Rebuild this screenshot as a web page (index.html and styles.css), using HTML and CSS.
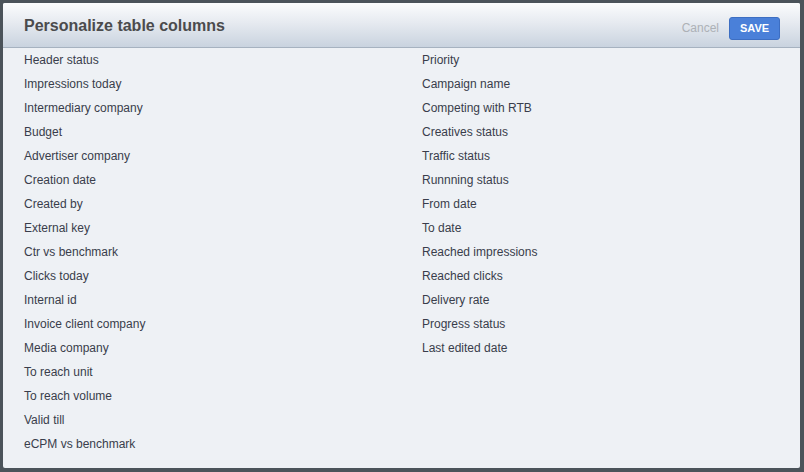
FILE: index.html
```html
<!DOCTYPE html>
<html>
<head>
<meta charset="utf-8">
<link rel="stylesheet" href="styles.css">
</head>
<body>
<div class="dialog">
  <div class="header">
    <h1 class="title">Personalize table columns</h1>
    <div class="actions">
      <span class="cancel">Cancel</span>
      <button class="save">SAVE</button>
    </div>
  </div>
  <div class="columns">
    <ul class="col">
      <li>Header status</li>
      <li>Impressions today</li>
      <li>Intermediary company</li>
      <li>Budget</li>
      <li>Advertiser company</li>
      <li>Creation date</li>
      <li>Created by</li>
      <li>External key</li>
      <li>Ctr vs benchmark</li>
      <li>Clicks today</li>
      <li>Internal id</li>
      <li>Invoice client company</li>
      <li>Media company</li>
      <li>To reach unit</li>
      <li>To reach volume</li>
      <li>Valid till</li>
      <li>eCPM vs benchmark</li>
    </ul>
    <ul class="col">
      <li>Priority</li>
      <li>Campaign name</li>
      <li>Competing with RTB</li>
      <li>Creatives status</li>
      <li>Traffic status</li>
      <li>Runnning status</li>
      <li>From date</li>
      <li>To date</li>
      <li>Reached impressions</li>
      <li>Reached clicks</li>
      <li>Delivery rate</li>
      <li>Progress status</li>
      <li>Last edited date</li>
    </ul>
  </div>
</div>
</body>
</html>
```
FILE: styles.css
```css
html, body {
  margin: 0;
  height: 100%;
}
body {
  background: #4b535a;
  padding: 3px 4px 4px 3px;
  box-sizing: border-box;
  font-family: "Liberation Sans", Arial, sans-serif;
}
.dialog {
  height: 100%;
  background: #eef1f5;
  display: flex;
  flex-direction: column;
  border-radius: 2px;
  overflow: hidden;
}
.header {
  height: 44px;
  flex: none;
  display: flex;
  align-items: center;
  justify-content: space-between;
  padding: 0 20px 0 21px;
  background: linear-gradient(to bottom, #fbfcfd 0%, #e6eaf0 45%, #c9d3df 100%);
  border-bottom: 1px solid #a6b2c0;
}
.title {
  margin: 0;
  font-size: 16px;
  font-weight: bold;
  color: #4b4b4d;
  position: relative;
  top: 1px;
}
.actions {
  display: flex;
  align-items: center;
  gap: 10px;
  position: relative;
  top: 3px;
}
.cancel {
  font-size: 12px;
  color: #adb1b6;
}
.save {
  width: 51px;
  height: 23px;
  padding: 0;
  border: 1px solid #3d6ec2;
  border-radius: 3px;
  background: #4a80d9;
  color: #fff;
  font-family: "Liberation Sans", Arial, sans-serif;
  font-weight: bold;
  font-size: 11px;
}
.columns {
  display: grid;
  grid-template-columns: 398px 1fr;
  padding-left: 21px;
}
.col {
  list-style: none;
  margin: 0;
  padding: 0;
}
.col li {
  font-size: 12px;
  line-height: 24px;
  color: #393d4b;
}
```
